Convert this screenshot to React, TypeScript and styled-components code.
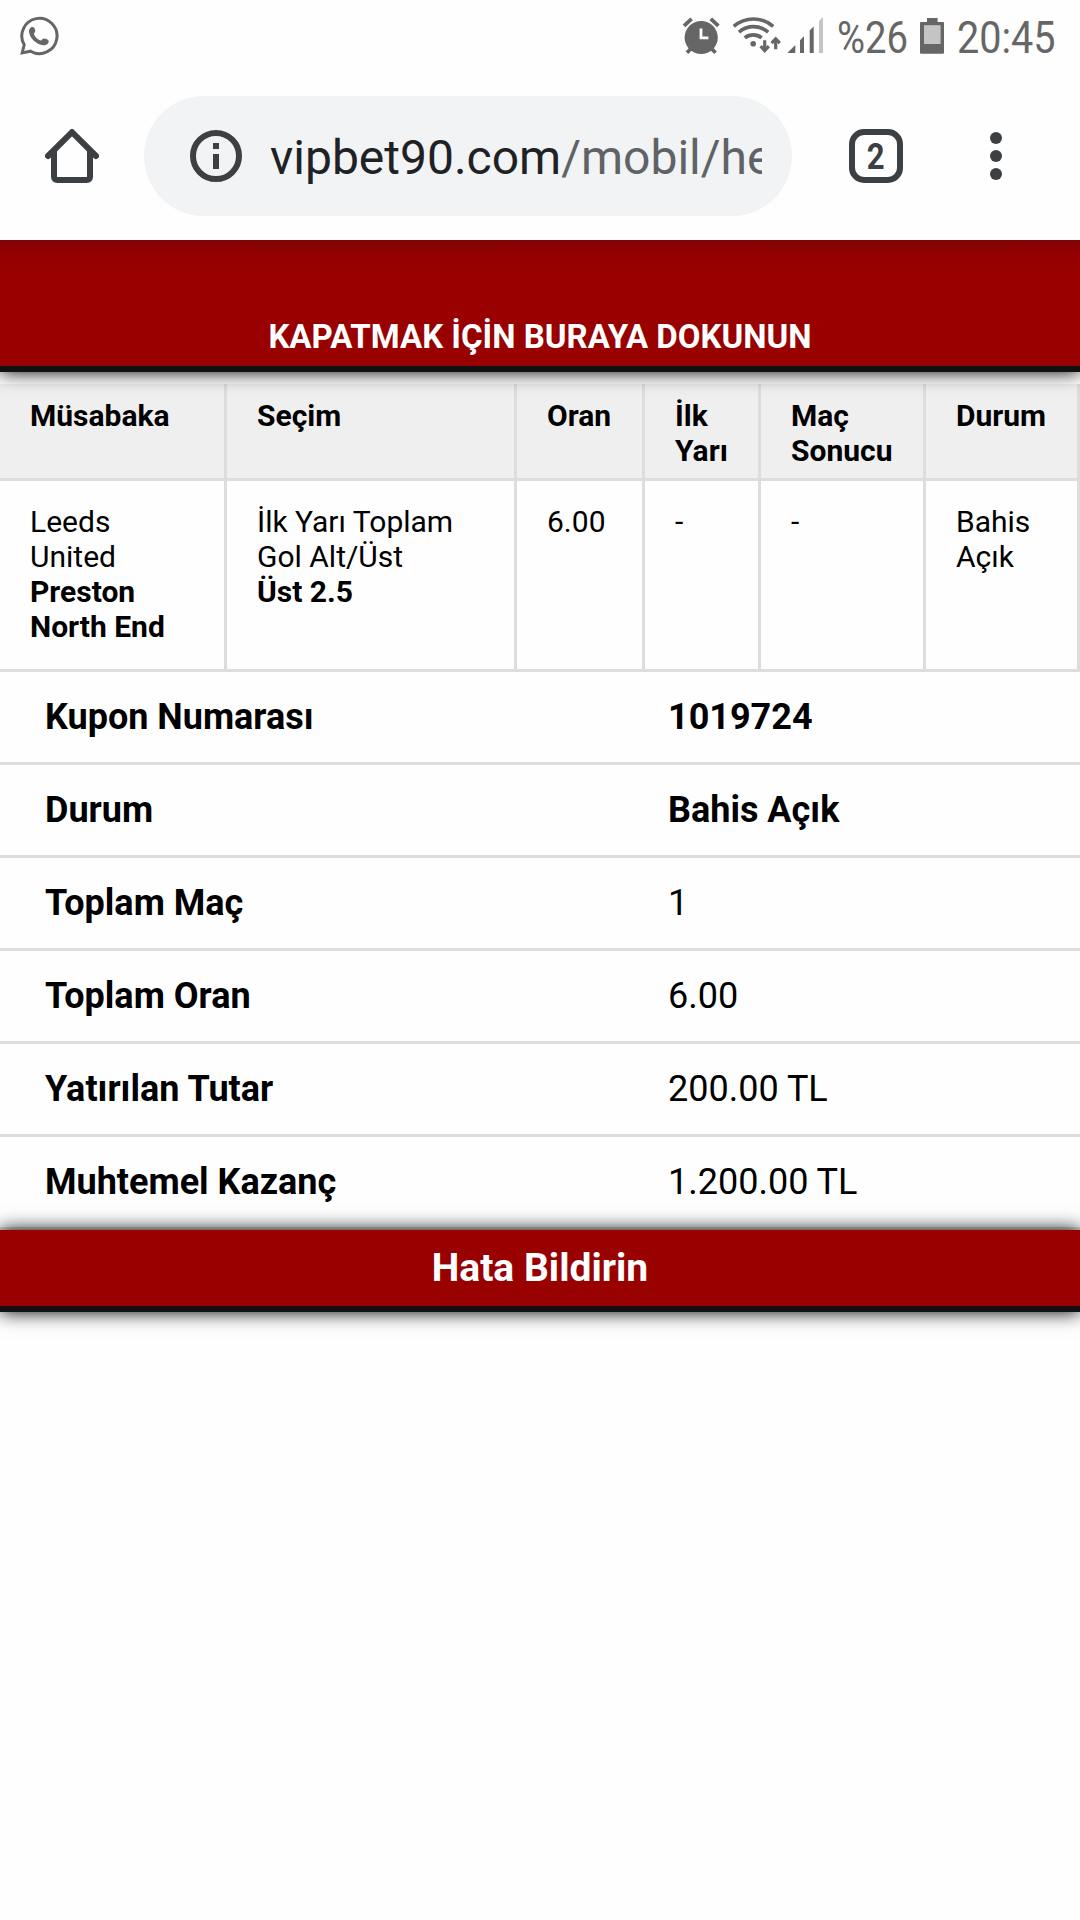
import React from "react";
import styled, { createGlobalStyle } from "styled-components";

const GlobalStyle = createGlobalStyle`
  * { box-sizing: border-box; }
  body { margin: 0; background: #fefefe; font-family: Roboto, "Liberation Sans", sans-serif; color: #000; }
`;

const Screen = styled.div`
  width: 1080px;
  height: 1920px;
  overflow: hidden;
  display: flex;
  flex-direction: column;
  background: #fefefe;
`;

const StatusBar = styled.header`
  height: 72px;
  display: flex;
  align-items: flex-start;
  padding-left: 18px;
  color: #666;
`;

const StatusIcon = styled.svg<{ $gap?: number }>`
  display: block;
  flex: none;
  margin-left: ${(p) => p.$gap ?? 0}px;
`;

const StatusText = styled.span<{ $w: number; $gap: number; $squeeze: number }>`
  width: ${(p) => p.$w}px;
  margin-left: ${(p) => p.$gap}px;
  flex: none;
  font-size: 45px;
  line-height: 75px;
  white-space: nowrap;
  transform: scaleX(${(p) => p.$squeeze});
  transform-origin: left;
`;

const Toolbar = styled.nav`
  height: 168px;
  display: flex;
  align-items: center;
  padding: 0 78px 0 45px;
`;

const Omnibox = styled.div`
  width: 648px;
  height: 120px;
  margin-left: 45px;
  padding: 0 30px 0 46px;
  border-radius: 60px;
  background: #f1f3f4;
  display: flex;
  align-items: center;
`;

const Address = styled.span`
  flex: 1;
  margin-left: 28px;
  padding-top: 4px;
  overflow: hidden;
  white-space: nowrap;
  font-size: 48px;
  line-height: 64px;
  color: #202124;
`;

const AddressPath = styled.span`
  color: #5f6368;
`;

const TabCount = styled.div`
  width: 54px;
  height: 54px;
  margin-left: 57px;
  border: 6px solid #3c4043;
  border-radius: 15px;
  display: flex;
  align-items: center;
  justify-content: center;
  color: #3c4043;
  font-size: 37px;
  font-weight: 700;
`;

const TabDigit = styled.span`
  transform: scaleX(0.84);
`;

const MenuDots = styled.svg`
  margin-left: auto;
`;

const Banner = styled.button`
  position: relative;
  height: 132px;
  flex: none;
  padding: 67px 0 0;
  border: 0;
  border-bottom: 6px solid #111;
  background: linear-gradient(#7c0508 0, #8b0202 7px, #960000 16px, #990000 24px);
  box-shadow: 0 0 18px #000;
  clip-path: inset(0 0 -40px 0);
  color: #fff;
  font: 700 33px/38px Roboto, "Liberation Sans", sans-serif;
`;

const columns = "227px 290px 128px 116px 165px 154px";

const MatchTable = styled.section`
  margin-top: 12px;
`;

const TableRow = styled.div<{ $head?: boolean }>`
  display: grid;
  grid-template-columns: ${columns};
  height: ${(p) => (p.$head ? 97 : 191)}px;
  background: ${(p) => (p.$head ? "#efefef" : "#fefefe")};
  font-weight: ${(p) => (p.$head ? 700 : 400)};
`;

const Cell = styled.div<{ $head?: boolean }>`
  padding: ${(p) => (p.$head ? 14 : 23)}px 0 0 30px;
  border-right: 3px solid #ddd;
  border-bottom: 3px solid #ddd;
  font-size: 30px;
  line-height: 35px;
  white-space: pre-line;
`;

const Summary = styled.dl`
  margin: 0;
`;

const SummaryRow = styled.div`
  height: 93px;
  display: grid;
  grid-template-columns: 623px 1fr;
  padding: 0 0 0 45px;
  border-bottom: 3px solid #ddd;
  font-size: 36px;
  line-height: 90px;
`;

const Label = styled.dt`
  font-weight: 700;
`;

const Value = styled.dd<{ $bold?: boolean }>`
  margin: 0;
  font-weight: ${(p) => (p.$bold ? 700 : 400)};
`;

const ReportButton = styled.button`
  position: relative;
  flex: none;
  height: 82px;
  padding: 0;
  border: 0;
  border-bottom: 6px solid #111;
  background: #990000;
  box-shadow: 0 0 18px #000;
  color: #fff;
  font: 700 39px/74px Roboto, "Liberation Sans", sans-serif;
`;

const headings = ["Müsabaka", "Seçim", "Oran", "İlk\nYarı", "Maç\nSonucu", "Durum"];

const summary = [
  { label: "Kupon Numarası", value: "1019724", bold: true },
  { label: "Durum", value: "Bahis Açık", bold: true },
  { label: "Toplam Maç", value: "1" },
  { label: "Toplam Oran", value: "6.00" },
  { label: "Yatırılan Tutar", value: "200.00 TL" },
  { label: "Muhtemel Kazanç", value: "1.200.00 TL" },
];

function WhatsAppIcon() {
  return (
    <StatusIcon width="42" height="60" viewBox="18 0 42 60">
      <path d="M22.2 52.9 L24.2 44.8 A17.6 17.6 0 1 1 30.6 51.2 Z" fill="none" stroke="#666" strokeWidth="3" strokeLinejoin="miter" />
      <path d="M31.3 27.2 C33.6 26.1 34.8 28 35.3 30.6 C35.6 32.3 34.2 32.8 33.8 33.8 C34.8 37 37.4 39.4 40.8 40.6 C42 40.2 42.2 38.6 44 38.4 C46 38.6 48.6 39.6 48.8 41 C48.6 44 46.2 45.2 43.4 45.2 C36 44.4 30 38.4 29 32 C28.9 29.8 29.8 28 31.3 27.2 Z" fill="#666" />
    </StatusIcon>
  );
}

function AlarmIcon() {
  return (
    <StatusIcon $gap={622} width="38" height="60" viewBox="682 0 38 60">
      <g stroke="#666" strokeWidth="3.8" fill="none">
        <path d="M684 25.8 L691.6 18.9 M710.8 18.9 L718.4 25.8" />
        <path d="M687 52.8 L691.5 48 M715.5 52.8 L711 48" />
      </g>
      <circle cx="701.2" cy="37.5" r="16.6" fill="#666" />
      <path d="M701 28.5 V37.8 H708.4" stroke="#fefefe" strokeWidth="2.8" fill="none" />
    </StatusIcon>
  );
}

function WifiIcon() {
  return (
    <StatusIcon $gap={12} width="50" height="60" viewBox="732 0 50 60">
      <g stroke="#666" strokeWidth="3.6" fill="none">
        <path d="M733.8 26.4 A30 30 0 0 1 773.2 26.4" />
        <path d="M739 32.2 A22 22 0 0 1 768.2 32.2" />
        <path d="M744.8 37.8 A13.5 13.5 0 0 1 761.6 37.8" />
      </g>
      <circle cx="753.2" cy="43.7" r="2.8" fill="#666" />
      <g stroke="#666" strokeWidth="3.2" fill="none">
        <path d="M764.7 40.2 V50 M775.7 49.2 V40" />
        <path d="M760.6 46.2 L764.7 50.6 L768.8 46.2 M771.6 43.2 L775.7 38.8 L779.8 43.2" />
      </g>
    </StatusIcon>
  );
}

function SignalIcon() {
  return (
    <StatusIcon $gap={4} width="38" height="60" viewBox="786 0 38 60">
      <path d="M787.3 53 L795.3 45 V53 Z M800 53 V40.3 L804 36.3 V53 Z M809.7 53 V30.4 L813.7 26.4 V53 Z" fill="#666" />
      <path d="M819 53 V21 L823 17 V53 Z" fill="#c4c4c4" />
    </StatusIcon>
  );
}

function BatteryIcon() {
  return (
    <StatusIcon $gap={12} width="26" height="60" viewBox="920 0 26 60">
      <path d="M928 18 H938.6 V22 H944 Q945 22 945 23 V52.8 Q945 53.8 944 53.8 H922 Q921 53.8 921 52.8 V23 Q921 22 922 22 H928 Z" fill="#666" />
      <rect x="925" y="25.2" width="16.6" height="18.8" fill="#c4c4c4" />
    </StatusIcon>
  );
}

export default function App() {
  return (
    <Screen>
      <GlobalStyle />
      <StatusBar>
        <WhatsAppIcon />
        <AlarmIcon />
        <WifiIcon />
        <SignalIcon />
        <StatusText $w={70} $gap={13} $squeeze={0.85}>%26</StatusText>
        <BatteryIcon />
        <StatusText $w={100} $gap={12} $squeeze={0.88}>20:45</StatusText>
      </StatusBar>
      <Toolbar>
        <svg width="54" height="54" viewBox="45 129 54 54">
          <path d="M48 156 L72 132.2 L96 156 M54 151 V176.5 Q54 180 57.5 180 H86.5 Q90 180 90 176.5 V151" fill="none" stroke="#3c4043" strokeWidth="6" strokeLinecap="round" />
        </svg>
        <Omnibox>
          <svg width="52" height="52" viewBox="0 0 52 52">
            <circle cx="26" cy="26" r="23" fill="none" stroke="#3c4043" strokeWidth="6" />
            <path d="M23 13 h6 v6 h-6 Z M23 24 h6 v15 h-6 Z" fill="#3c4043" />
          </svg>
          <Address>
            vipbet90.com<AddressPath>/mobil/he</AddressPath>
          </Address>
        </Omnibox>
        <TabCount>
          <TabDigit>2</TabDigit>
        </TabCount>
        <MenuDots width="12" height="48" viewBox="0 0 12 48" fill="#3c4043">
          <circle cx="6" cy="6" r="6" />
          <circle cx="6" cy="24" r="6" />
          <circle cx="6" cy="42" r="6" />
        </MenuDots>
      </Toolbar>
      <Banner>KAPATMAK İÇİN BURAYA DOKUNUN</Banner>
      <MatchTable>
        <TableRow $head>
          {headings.map((h) => (
            <Cell key={h} $head>{h}</Cell>
          ))}
        </TableRow>
        <TableRow>
          <Cell>{"Leeds\nUnited\n"}<b>{"Preston\nNorth End"}</b></Cell>
          <Cell>{"İlk Yarı Toplam\nGol Alt/Üst\n"}<b>Üst 2.5</b></Cell>
          <Cell>6.00</Cell>
          <Cell>-</Cell>
          <Cell>-</Cell>
          <Cell>{"Bahis\nAçık"}</Cell>
        </TableRow>
      </MatchTable>
      <Summary>
        {summary.map((s) => (
          <SummaryRow key={s.label}>
            <Label>{s.label}</Label>
            <Value $bold={s.bold}>{s.value}</Value>
          </SummaryRow>
        ))}
      </Summary>
      <ReportButton>Hata Bildirin</ReportButton>
    </Screen>
  );
}
